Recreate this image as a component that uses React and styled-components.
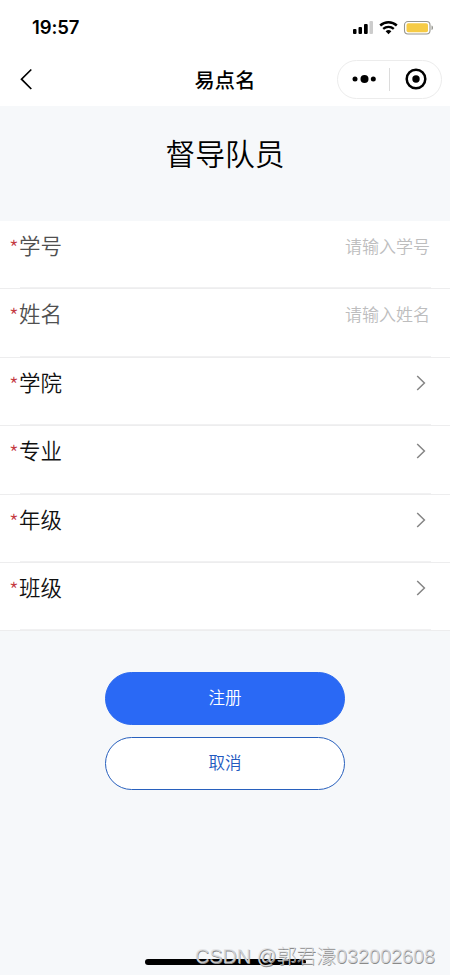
import React from "react";
import styled, { createGlobalStyle } from "styled-components";

const GlobalStyle = createGlobalStyle`
  * { box-sizing: border-box; }
  body {
    margin: 0;
    background: #f6f8fa;
    font-family: "Noto Sans CJK SC", sans-serif;
  }
  button, input { font-family: inherit; margin: 0; padding: 0; }
`;

const Screen = styled.div`
  position: relative;
  display: flex;
  flex-direction: column;
  width: 450px;
  height: 975px;
  overflow: hidden;
  background: #f6f8fa;
`;

const StatusBar = styled.header`
  display: flex;
  align-items: center;
  justify-content: space-between;
  height: 54px;
  padding: 0 16px 0 32px;
  background: #fff;
`;

const Clock = styled.time`
  font: 600 18.5px/24px Inter, sans-serif;
  letter-spacing: -0.1px;
  color: #000;
`;

const StatusIcons = styled.svg`
  width: 82px;
  height: 16px;
  display: block;
`;

const NavBar = styled.nav`
  display: grid;
  grid-template-columns: 1fr auto 1fr;
  align-items: center;
  height: 52px;
  padding: 0 8px 2px 19px;
  background: #fff;
`;

const BackButton = styled.button`
  display: flex;
  width: 15px;
  height: 22px;
  border: 0;
  background: none;
`;

const NavTitle = styled.h1`
  margin: 2px 0 0 -11px;
  font-size: 20.2px;
  line-height: 30px;
  font-weight: 500;
  letter-spacing: 0.2px;
  color: #000;
`;

const Capsule = styled.div`
  justify-self: end;
  display: flex;
  align-items: center;
  width: 105px;
  height: 39px;
  border: 1px solid #ececec;
  border-radius: 20px;
`;

const CapsuleButton = styled.button`
  flex: 1;
  display: flex;
  justify-content: center;
  border: 0;
  background: none;
`;

const CapsuleDivider = styled.span`
  width: 1px;
  height: 23px;
  background: #dcdcdc;
`;

const PageTitle = styled.h2`
  height: 115px;
  margin: 0;
  padding-top: 24px;
  font-size: 29.8px;
  line-height: 44px;
  font-weight: 350;
  text-align: center;
  color: #000;
`;

const Form = styled.form`
  display: flex;
  flex-direction: column;
`;

const Row = styled.div`
  display: flex;
  align-items: flex-start;
  justify-content: space-between;
  height: 68.4px;
  padding: 8px 20px 0 9px;
  background:
    linear-gradient(#f1f1f2, #f1f1f2) 20px 100% / 411px 1px no-repeat,
    #fff;
  border-bottom: 1px solid #ededee;
`;

const Label = styled.label`
  display: flex;
  font-size: 21.5px;
  line-height: 32px;
  font-weight: 350;
  color: ${(p) => (p.$muted ? "#505050" : "#111")};
`;

const Required = styled.span`
  width: 10px;
  font-size: 22px;
  line-height: 37px;
  font-weight: 300;
  color: #c43a42;
`;

const TextField = styled.input`
  width: 160px;
  height: 32px;
  border: 0;
  outline: 0;
  background: transparent;
  text-align: right;
  font-size: 17px;
  font-weight: 350;
  &::placeholder { color: #bdbdbe; opacity: 1; }
`;

const Chevron = styled.svg`
  width: 10px;
  height: 16px;
  margin: 9px 4px 0 0;
`;

const Actions = styled.div`
  display: flex;
  flex-direction: column;
  align-items: center;
  gap: 12px;
  padding-top: 41px;
`;

const ActionButton = styled.button`
  width: 240px;
  height: 53px;
  padding-bottom: 3px;
  border: 1px solid ${(p) => (p.$primary ? "#2b69ee" : "#2860bd")};
  border-radius: 27px;
  background: ${(p) => (p.$primary ? "#2a69f5" : "#fff")};
  color: ${(p) => (p.$primary ? "#fff" : "#2259c0")};
  font-size: 16.5px;
  font-weight: 350;
`;

const HomeIndicator = styled.div`
  position: absolute;
  left: 145px;
  bottom: 10px;
  width: 161px;
  height: 6px;
  border-radius: 3px;
  background: #000;
`;

const Watermark = styled.div`
  position: absolute;
  left: 195px;
  top: 942px;
  white-space: nowrap;
  font: 300 19.8px/28px "Liberation Sans", "Noto Sans CJK SC", sans-serif;
  color: rgba(225, 226, 228, 0.8);
  text-shadow: 0.6px 0.6px 0.6px #8a8a8a;
`;

const fields = [
  { label: "学号", placeholder: "请输入学号" },
  { label: "姓名", placeholder: "请输入姓名" },
  { label: "学院" },
  { label: "专业" },
  { label: "年级" },
  { label: "班级" },
];

function DeviceStatus() {
  return (
    <StatusIcons viewBox="0 0 82 16">
      <rect x="1" y="10" width="3.5" height="5" rx="1" />
      <rect x="6.5" y="8" width="3.5" height="7" rx="1" />
      <rect x="12" y="5" width="3.7" height="10" rx="1" />
      <rect x="17.5" y="2" width="3.5" height="13" rx="1" fill="#ccc" />
      <g fill="none" stroke="#000" strokeWidth="2.4">
        <path d="M28.2 6.5a12.2 12.2 0 0 1 16.6 0" />
        <path d="M31.2 9.9a8 8 0 0 1 10.6 0" />
      </g>
      <path d="M33.6 12.3a4.5 4.5 0 0 1 5.8 0l-2.9 3z" />
      <rect x="52.5" y="2.5" width="25.5" height="12.5" rx="3.5" fill="#fff" stroke="#96968f" strokeWidth="1.1" />
      <rect x="54.5" y="4.3" width="21.5" height="9" rx="1.8" fill="#f6cb45" />
      <path d="M79.5 6.5c2 .5 2 4 0 4.5z" fill="#96968f" />
    </StatusIcons>
  );
}

export default function App() {
  return (
    <>
      <GlobalStyle />
      <Screen>
        <StatusBar>
          <Clock>19:57</Clock>
          <DeviceStatus />
        </StatusBar>
        <NavBar>
          <BackButton aria-label="返回">
            <svg width="15" height="22" viewBox="0 0 15 22" fill="none" stroke="#000" strokeWidth="1.7">
              <path d="M12.3 1.5 2.5 11.2l9.8 9.8" />
            </svg>
          </BackButton>
          <NavTitle>易点名</NavTitle>
          <Capsule>
            <CapsuleButton aria-label="更多">
              <svg width="24" height="10" viewBox="0 0 24 10">
                <circle cx="3" cy="5" r="2.5" />
                <circle cx="12.5" cy="5" r="4" />
                <circle cx="21.3" cy="5" r="2.5" />
              </svg>
            </CapsuleButton>
            <CapsuleDivider />
            <CapsuleButton aria-label="关闭">
              <svg width="22" height="22" viewBox="0 0 22 22">
                <circle cx="11" cy="11" r="9.3" fill="none" stroke="#000" strokeWidth="2.5" />
                <circle cx="11" cy="11" r="3.7" />
              </svg>
            </CapsuleButton>
          </Capsule>
        </NavBar>
        <PageTitle>督导队员</PageTitle>
        <Form>
          {fields.map(({ label, placeholder }) => (
            <Row key={label}>
              <Label $muted={Boolean(placeholder)}>
                <Required>*</Required>
                {label}
              </Label>
              {placeholder ? (
                <TextField placeholder={placeholder} />
              ) : (
                <Chevron viewBox="0 0 10 16" fill="none" stroke="#858585" strokeWidth="1.5">
                  <path d="m1.2 1 7.2 7-7.2 7" />
                </Chevron>
              )}
            </Row>
          ))}
        </Form>
        <Actions>
          <ActionButton $primary>注册</ActionButton>
          <ActionButton>取消</ActionButton>
        </Actions>
        <HomeIndicator />
        <Watermark>CSDN @郭君濠032002608</Watermark>
      </Screen>
    </>
  );
}
